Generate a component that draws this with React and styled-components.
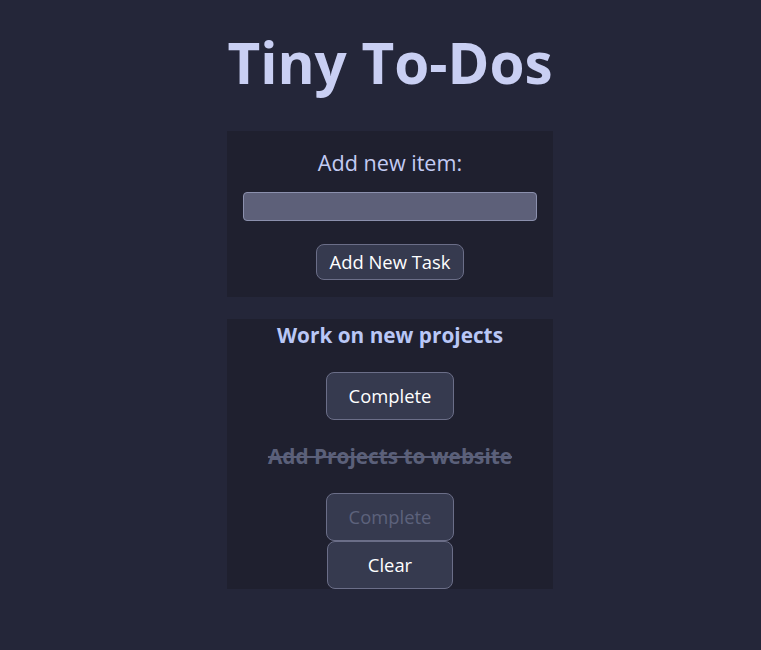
import React from "react";
import styled, { createGlobalStyle } from "styled-components";

const Global = createGlobalStyle`
  html, body { margin: 0; padding: 0; background: #242639; }
  body { font-family: "Open Sans", "Noto Sans", sans-serif; }
`;

const Page = styled.div`
  display: flex;
  flex-direction: column;
  align-items: center;
  padding: 25px 0 0 19px;
`;

const Title = styled.h1`
  margin: 0 0 30px;
  font-size: 56.6px;
  line-height: 76px;
  font-weight: 700;
  color: #c9cff3;
`;

const Card = styled.section`
  width: 326px;
  box-sizing: border-box;
  background: #1f202f;
  display: flex;
  flex-direction: column;
  align-items: center;
  padding: ${(p) => p.$pad || "0"};
  margin-bottom: 22px;
`;

const Label = styled.label`
  font-size: 21.6px;
  line-height: 29px;
  color: #c3cbf3;
  margin-bottom: 15px;
`;

const Input = styled.input`
  width: 294px;
  height: 29px;
  box-sizing: border-box;
  background: #5d6079;
  border: 1px solid #8b90ad;
  border-radius: 4px;
  margin: 0 0 23px;
`;

const Button = styled.button`
  font-family: "Open Sans", "Noto Sans", sans-serif;
  font-size: 18.4px;
  line-height: 26px;
  color: ${(p) => (p.disabled ? "#5d627c" : "#ffffff")};
  background: #363a4f;
  border: 1px solid #6b6e88;
  border-radius: 8px;
  min-width: ${(p) => (p.$big ? "126px" : "0")};
  padding: ${(p) => (p.$big ? "10px 22px" : "4px 13px")};
  margin: 0;
  cursor: pointer;
`;

const TaskTitle = styled.h3`
  margin: ${(p) => (p.$first ? "2px 0 23px" : "22px 0 23px")};
  font-size: 20.8px;
  line-height: 28px;
  font-weight: 700;
  color: ${(p) => (p.$done ? "#5b607a" : "#b9c7f6")};
  text-decoration: ${(p) => (p.$done ? "line-through" : "none")};
`;

const Stack = styled.div`
  display: flex;
  flex-direction: column;
  align-items: center;
`;

export default function App() {
  return (
    <>
      <Global />
      <Page>
        <Title>Tiny To-Dos</Title>
        <Card $pad="17px 16px 17px">
          <Label>Add new item:</Label>
          <Input type="text" />
          <Button>Add New Task</Button>
        </Card>
        <Card>
          <TaskTitle $first>Work on new projects</TaskTitle>
          <Button $big>Complete</Button>
          <TaskTitle $done>Add Projects to website</TaskTitle>
          <Stack>
            <Button $big disabled>Complete</Button>
            <Button $big>Clear</Button>
          </Stack>
        </Card>
      </Page>
    </>
  );
}
